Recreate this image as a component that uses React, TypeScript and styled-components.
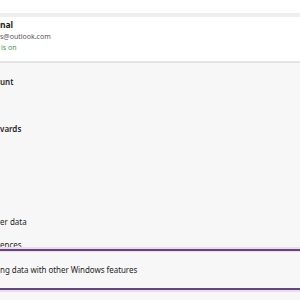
import styled, { createGlobalStyle } from 'styled-components';

const GlobalStyle = createGlobalStyle`
  html, body {
    margin: 0;
    padding: 0;
    background: #f7f7f7;
  }
  body {
    font-family: 'Noto Sans', 'Open Sans', sans-serif;
    color: #1b1b1b;
    overflow: hidden;
  }
`;

const Page = styled.div`
  width: 300px;
  height: 300px;
  display: flex;
  flex-direction: column;
  overflow: hidden;
  background: #f7f7f7;
`;

const TopStrip = styled.div`
  height: 13px;
  background: #ffffff;
`;

const Band = styled.div`
  height: 4px;
  background: #eeeeee;
`;

const ProfileCard = styled.div`
  height: 44px;
  background: #ffffff;
  border-bottom: 2px solid #e4e4e4;
  display: flex;
  flex-direction: column;
`;

const Name = styled.div`
  font-size: 8.5px;
  font-weight: 700;
  line-height: 12px;
  margin-top: 2px;
`;

const Email = styled.div`
  font-size: 7px;
  line-height: 11px;
  color: #575757;
`;

const Status = styled.div`
  font-size: 7px;
  line-height: 12px;
  color: #4c944c;
  margin-left: 1px;
`;

const List = styled.div`
  display: flex;
  flex-direction: column;
`;

const Row = styled.div<{ $h: number; $bold?: boolean }>`
  height: ${(p) => p.$h}px;
  display: flex;
  align-items: center;
  font-size: 8px;
  line-height: 11px;
  font-weight: ${(p) => (p.$bold ? 600 : 400)};
  color: #1f1f1f;
  white-space: nowrap;
`;

const BottomRow = styled(Row)`
  align-items: flex-end;
  line-height: 8px;
`;

const FocusRow = styled.div`
  height: 37px;
  display: flex;
  align-items: center;
  font-size: 8px;
  line-height: 11px;
  letter-spacing: -0.05px;
  color: #1f1f1f;
  white-space: nowrap;
  border-top: 2px solid #5b4a7a;
  border-bottom: 2px solid #5b4a7a;
  box-shadow: 0 -2px 0 #f4d8ef, 0 2px 0 #f4d8ef, inset 0 1px 0 #f4d8ef;
`;

export default function App() {
  return (
    <>
      <GlobalStyle />
      <Page>
        <TopStrip />
        <Band />
        <ProfileCard>
          <Name>nal</Name>
          <Email>s@outlook.com</Email>
          <Status>is on</Status>
        </ProfileCard>
        <List>
          <Row $h={36} $bold>
            unt
          </Row>
          <Row $h={58} $bold>
            vards
          </Row>
          <Row $h={48} />
          <Row $h={33}>er data</Row>
          <BottomRow $h={11}>ences</BottomRow>
          <FocusRow>ng data with other Windows features</FocusRow>
        </List>
      </Page>
    </>
  );
}
